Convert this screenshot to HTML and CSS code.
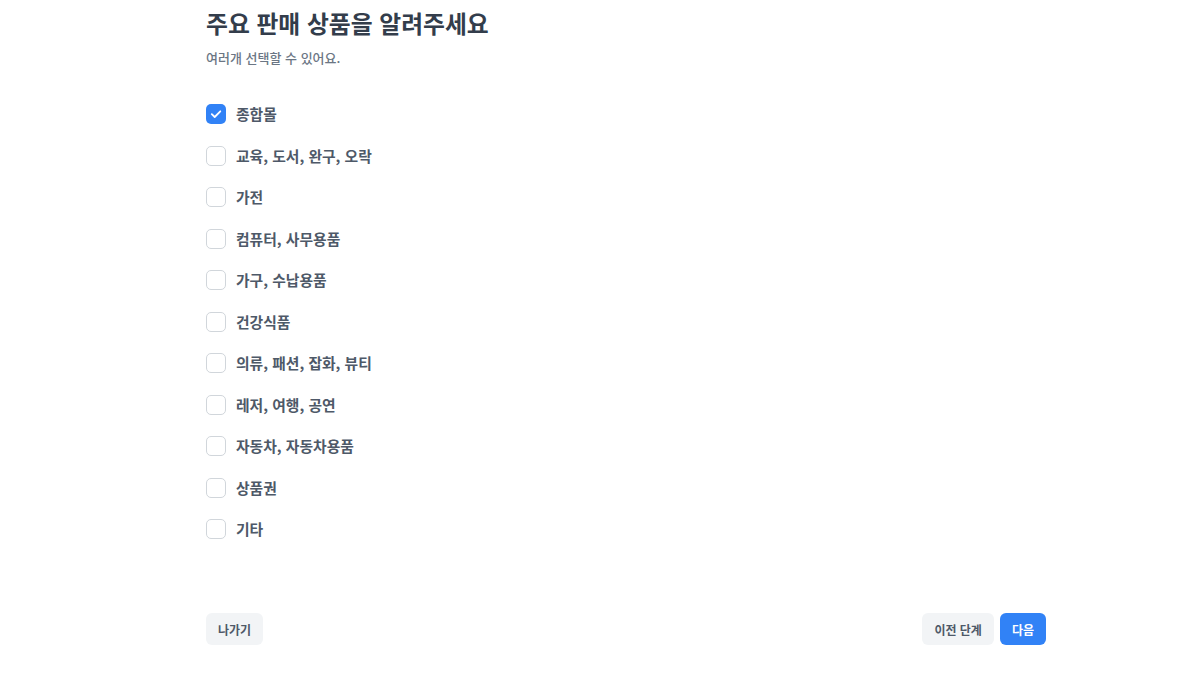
FILE: index.html
```html
<!DOCTYPE html>
<html lang="ko">
<head>
<meta charset="utf-8">
<link rel="stylesheet" href="styles.css">
</head>
<body>
<main class="page">
  <h1 class="title">주요 판매 상품을 알려주세요</h1>
  <p class="subtitle">여러개 선택할 수 있어요.</p>
  <ul class="options">
    <li class="option"><span class="box checked"><svg viewBox="0 0 20 20" width="20" height="20"><path d="M5.8 10.2l2.9 2.8L14.3 7.3" fill="none" stroke="#fff" stroke-width="1.8" stroke-linecap="round" stroke-linejoin="round"/></svg></span><span class="label">종합몰</span></li>
    <li class="option"><span class="box"></span><span class="label">교육, 도서, 완구, 오락</span></li>
    <li class="option"><span class="box"></span><span class="label">가전</span></li>
    <li class="option"><span class="box"></span><span class="label">컴퓨터, 사무용품</span></li>
    <li class="option"><span class="box"></span><span class="label">가구, 수납용품</span></li>
    <li class="option"><span class="box"></span><span class="label">건강식품</span></li>
    <li class="option"><span class="box"></span><span class="label">의류, 패션, 잡화, 뷰티</span></li>
    <li class="option"><span class="box"></span><span class="label">레저, 여행, 공연</span></li>
    <li class="option"><span class="box"></span><span class="label">자동차, 자동차용품</span></li>
    <li class="option"><span class="box"></span><span class="label">상품권</span></li>
    <li class="option"><span class="box"></span><span class="label">기타</span></li>
  </ul>
  <div class="actions">
    <button class="btn btn-light">나가기</button>
    <div class="actions-right">
      <button class="btn btn-light">이전 단계</button>
      <button class="btn btn-primary">다음</button>
    </div>
  </div>
</main>
</body>
</html>
```

FILE: styles.css
```css
* { box-sizing: border-box; }
html, body { margin: 0; padding: 0; background: #fff; }
body {
  font-family: "Noto Sans CJK KR", "Noto Sans", sans-serif;
  color: #333d4b;
}
.page {
  width: 840px;
  margin-left: 206px;
  padding-top: 5px;
}
.title {
  margin: 0;
  font-size: 23.8px;
  line-height: 36px;
  font-weight: 700;
  color: #333d4b;
}
.subtitle {
  margin: 7px 0 0;
  font-size: 13px;
  line-height: 20px;
  color: #6b7684;
  font-weight: 500;
}
.options {
  list-style: none;
  margin: 36px 0 0;
  padding: 0;
  display: flex;
  flex-direction: column;
  gap: 21.5px;
}
.option {
  display: flex;
  align-items: center;
  gap: 10px;
  height: 20px;
}
.box {
  width: 20px;
  height: 20px;
  border: 1.5px solid #d1d6db;
  border-radius: 5px;
  background: #fff;
  flex: none;
  display: flex;
}
.box.checked {
  border: none;
  background: #3182f6;
}
.label {
  font-size: 14.8px;
  font-weight: 700;
  color: #4e5968;
  line-height: 20px;
}
.actions {
  margin-top: 74px;
  display: flex;
  justify-content: space-between;
  align-items: center;
}
.actions-right {
  display: flex;
  gap: 6px;
}
.btn {
  height: 32px;
  padding: 0 12px;
  border: none;
  border-radius: 6px;
  font-family: inherit;
  font-size: 12px;
  font-weight: 700;
  cursor: pointer;
}
.btn-light {
  background: #f2f4f6;
  color: #4e5968;
}
.btn-primary {
  background: #3182f6;
  color: #fff;
}
```
